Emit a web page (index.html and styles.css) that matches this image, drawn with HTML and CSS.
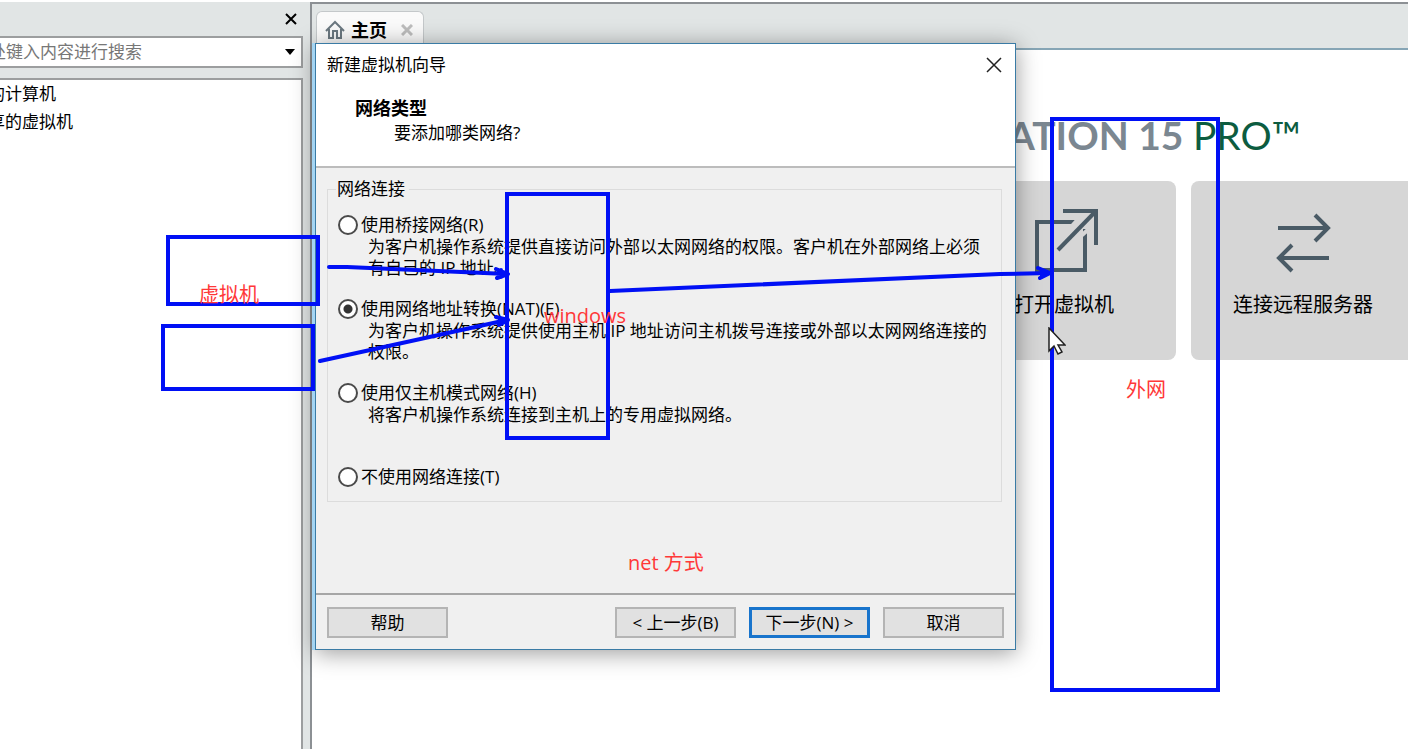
FILE: index.html
```html
<!DOCTYPE html>
<html lang="zh-CN">
<head>
<meta charset="utf-8">
<title>新建虚拟机向导</title>
<link rel="stylesheet" href="styles.css">
</head>
<body>
<div class="app">
  <aside class="sidebar">
    <div class="sidebar-head">
      <button class="icon-button" aria-label="关闭侧栏">
        <svg width="12" height="12" viewBox="0 0 12 12"><path d="M1 1l10 10M11 1L1 11" stroke="#000" stroke-width="2"/></svg>
      </button>
    </div>
    <div class="search">
      <input class="search-input" type="text" aria-label="搜索" placeholder="在此处键入内容进行搜索">
      <button class="icon-button" aria-label="展开搜索选项">
        <svg width="10" height="6" viewBox="0 0 10 6"><path d="M0 0h10L5 6z"/></svg>
      </button>
    </div>
    <ul class="tree">
      <li>我的计算机</li>
      <li>共享的虚拟机</li>
    </ul>
  </aside>
  <main class="main">
    <div class="tabs">
      <div class="tab">
        <svg width="20" height="20" viewBox="0 0 20 20" fill="none" stroke="#6b7880" stroke-width="2"><path d="M1 11L10 2l9 9M4 9v9h4v-7h4v7h4V9"/></svg>
        <span class="tab-name">主页</span>
        <button class="icon-button" aria-label="关闭标签">
          <svg width="12" height="12" viewBox="0 0 12 12"><path d="M1 1l10 10M11 1L1 11" stroke="#bdbdbd" stroke-width="3"/></svg>
        </button>
      </div>
    </div>
    <section class="home">
      <h1 class="brand">ATION 15 <span class="brand-pro">PRO™</span></h1>
      <div class="cards">
        <button class="card">
          <svg width="68" height="66" viewBox="0 0 68 66" fill="none" stroke="#4a5b66" stroke-width="4"><path d="M46 14H7v48h48V21M33 3h33v34"/><path d="M41 19l9-10M51 28l10-9" stroke="#d6d6d6" stroke-width="4"/><path d="M66 3L28 42"/></svg>
          <span>打开虚拟机</span>
        </button>
        <button class="card">
          <svg width="68" height="66" viewBox="0 0 68 66" fill="none" stroke="#4a5b66" stroke-width="4"><path d="M9 20h50M46 7l13 13-13 13M60 50H10M23 37L10 50l13 13"/></svg>
          <span>连接远程服务器</span>
        </button>
      </div>
    </section>
  </main>
</div>

<form class="dialog" role="dialog" aria-labelledby="dialog-title">
  <header class="dialog-head">
    <div class="title-bar">
      <span id="dialog-title">新建虚拟机向导</span>
      <button type="button" class="icon-button" aria-label="关闭">
        <svg width="16" height="16" viewBox="0 0 16 16"><path d="M1 1l14 14M15 1L1 15" stroke="#222" stroke-width="1.5"/></svg>
      </button>
    </div>
    <h2 class="step-title">网络类型</h2>
    <p class="step-text">要添加哪类网络?</p>
  </header>
  <div class="dialog-body">
    <fieldset class="group">
      <legend>网络连接</legend>
      <div class="option">
        <input type="radio" name="net" id="bridge">
        <label for="bridge">使用桥接网络(R)</label>
        <p>为客户机操作系统提供直接访问外部以太网网络的权限。客户机在外部网络上必须<br>有自己的 IP 地址。</p>
      </div>
      <div class="option">
        <input type="radio" name="net" id="nat" checked>
        <label for="nat">使用网络地址转换(NAT)(E)</label>
        <p>为客户机操作系统提供使用主机 IP 地址访问主机拨号连接或外部以太网网络连接的<br>权限。</p>
      </div>
      <div class="option">
        <input type="radio" name="net" id="host">
        <label for="host">使用仅主机模式网络(H)</label>
        <p>将客户机操作系统连接到主机上的专用虚拟网络。</p>
      </div>
      <div class="option option-last">
        <input type="radio" name="net" id="none">
        <label for="none">不使用网络连接(T)</label>
      </div>
    </fieldset>
  </div>
  <footer class="dialog-foot">
    <button type="button" class="button button-help">帮助</button>
    <button type="button" class="button">&lt; 上一步(B)</button>
    <button type="button" class="button button-primary">下一步(N) &gt;</button>
    <button type="button" class="button">取消</button>
  </footer>
</form>

<svg class="ink" width="1408" height="749" viewBox="0 0 1408 749" fill="none" stroke="#0010f5" stroke-width="4">
  <rect x="168" y="237" width="150" height="67"/>
  <rect x="163" y="326" width="150" height="63"/>
  <rect x="507" y="194" width="101" height="244"/>
  <rect x="1052" y="119" width="166" height="571"/>
  <g stroke-linecap="round" stroke-linejoin="round">
    <path d="M329 267l18 0 160 7M496 269l12 5-11 4M501 270v7"/>
    <path d="M320 361L507 320M496 317l12 3-9 5M500 318v5"/>
    <path d="M610 291l390-17 50-1M1038 268l12 5-10 5M1042 270v6"/>
  </g>
</svg>
<svg class="cursor" width="18" height="28" viewBox="0 0 18 28"><path d="M1 1v23l5-5 4 8 4-2-4-7h7z" fill="#fff" stroke="#222" stroke-width="1.5"/></svg>
<span class="note note-vm">虚拟机</span>
<span class="note note-windows">windows</span>
<span class="note note-net">net 方式</span>
<span class="note note-outer">外网</span>
</body>
</html>
```
FILE: styles.css
```css
* { box-sizing: border-box; }

body {
  margin: 0;
  height: 100vh;
  overflow: hidden;
  position: relative;
  font: 17px/20px "Open Sans", "Noto Sans CJK SC", sans-serif;
  color: #000;
  background: #fff;
}

button, input { font: inherit; color: inherit; }
h1, h2, p, ul { margin: 0; padding: 0; }
svg { display: block; }

.icon-button {
  padding: 0;
  border: 0;
  background: none;
}

/* The application window reaches past both sides of the viewport. */
.app {
  display: flex;
  height: 100%;
  margin: 0 -408px 0 -72px;
  padding-top: 2px;
}

.sidebar {
  flex: none;
  width: 382px;
  padding-right: 7px;
  display: flex;
  flex-direction: column;
  background: #e1e5e5;
}

.sidebar-head {
  height: 34px;
  padding: 0 6px;
  display: flex;
  align-items: center;
  justify-content: flex-end;
}

.search {
  height: 32px;
  margin-bottom: 10px;
  padding: 0 6px 0 25px;
  display: flex;
  align-items: center;
  border: 2px solid #9c9e9f;
  background: #fff;
}

.search-input {
  flex: 1;
  min-width: 0;
  padding: 0;
  border: 0;
  outline: 0;
  background: none;
}
.search-input::placeholder { color: #777; opacity: 1; }

.tree {
  flex: 1;
  padding: 0 0 0 41px;
  list-style: none;
  line-height: 28px;
  border: 2px solid #9c9e9f;
  border-bottom: 0;
  background: #fff;
}

.main {
  flex: 1;
  display: flex;
  flex-direction: column;
  border: 2px solid #8c9094;
  border-width: 2px 0 0 2px;
}

.tabs {
  height: 46px;
  padding: 7px 0 0 4px;
  display: flex;
  background: #e1e5e5;
  border-bottom: 2px solid #86a5b5;
}

.tab {
  padding: 0 10px 0 8px;
  display: flex;
  align-items: center;
  gap: 6px;
  border: 1px solid #c4c8ca;
  border-bottom: 0;
  border-radius: 6px 6px 0 0;
  background: #fafafa;
}

.tab-name {
  font-size: 18px;
  font-weight: bold;
  margin-right: 8px;
}

.home {
  flex: 1;
  width: 702px;
  margin: 0 auto;
  padding-top: 63px;
}

.brand {
  padding-right: 114px;
  margin-bottom: 24px;
  text-align: right;
  font: 700 39px/44px Lato, sans-serif;
  color: #7b8791;
}
.brand-pro { font-weight: 400; color: #0c5c40; }

.cards {
  display: flex;
  justify-content: flex-end;
  gap: 15px;
}

.card {
  width: 224px;
  height: 179px;
  padding: 27px 0 0;
  display: flex;
  flex-direction: column;
  align-items: center;
  justify-content: flex-start;
  gap: 17px;
  font-size: 20px;
  line-height: 28px;
  border: 0;
  border-radius: 8px;
  background: #d6d6d6;
}

.dialog {
  position: absolute;
  left: 315px;
  top: 43px;
  width: 701px;
  display: flex;
  flex-direction: column;
  border: 1px solid #3a7ba5;
  background: #f0f0f0;
  box-shadow: -3px 0 0 #a4d4f2, 0 3px 22px rgba(0, 0, 0, 0.4);
}

.dialog-head {
  padding: 8px 13px 20px 11px;
  background: #fff;
  border-bottom: 2px solid #bcbcbc;
}

.title-bar {
  display: flex;
  align-items: center;
  justify-content: space-between;
  line-height: 26px;
}

.step-title {
  margin: 18px 0 0 28px;
  font-size: 18px;
  line-height: 24px;
}

.step-text {
  padding-left: 67px;
  line-height: 26px;
}

.dialog-body { padding: 11px 13px 91px 11px; }

.group {
  margin: 0;
  padding: 15px 8px 0 10px;
  border: 1px solid #dcdcdc;
}
.group legend {
  padding: 0 4px 0 1px;
  margin-left: -2px;
  line-height: 20px;
}

.option {
  min-height: 84px;
  display: grid;
  grid-template-columns: 23px 1fr;
  grid-template-rows: 22px auto;
  align-items: center;
  align-content: start;
}
.option-last { min-height: 35px; }

.option input {
  appearance: none;
  width: 20px;
  height: 20px;
  margin: 0;
  border: 2px solid #4a4a4a;
  border-radius: 50%;
  background: #fff;
}
.option input:checked {
  background: radial-gradient(circle, #333 0 4px, #fff 5px);
}

.option p {
  grid-column: 1 / -1;
  padding-left: 30px;
  line-height: 21px;
  white-space: nowrap;
}

.dialog-foot {
  padding: 12px 11px 11px;
  display: flex;
  gap: 13px;
  border-top: 2px solid #a6a6a6;
}

.button {
  width: 121px;
  height: 31px;
  padding: 0;
  border: 2px solid #b4b4b4;
  background: #e1e1e1;
}
.button-help { margin-right: auto; }
.button-primary { border: 3px solid #1874cc; }

.cursor {
  position: absolute;
  left: 1048px;
  top: 327px;
}

.ink {
  position: absolute;
  left: 0;
  top: 0;
}

.note {
  position: absolute;
  font-size: 20px;
  line-height: 28px;
  color: #ff3838;
}
.note-vm { left: 199px; top: 281px; }
.note-windows { left: 544px; top: 302px; }
.note-net { left: 628px; top: 549px; }
.note-outer { left: 1126px; top: 376px; }
```
